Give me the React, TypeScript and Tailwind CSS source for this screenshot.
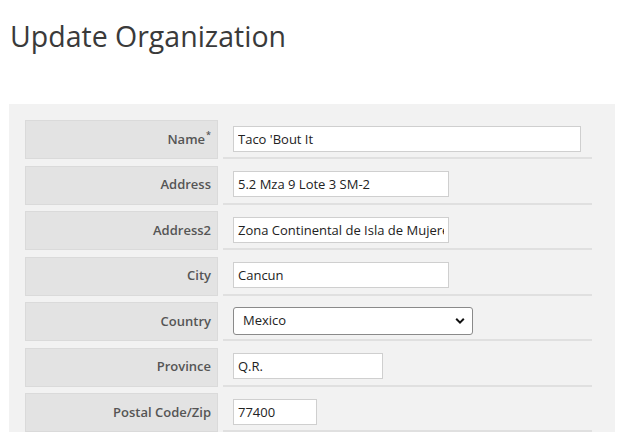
import React from "react";

type Field = {
	label: string;
	value: string;
	width: string;
	required?: boolean;
	select?: boolean;
};

const fields: Field[] = [
	{ label: "Name", value: "Taco 'Bout It", width: "w-[348px]", required: true },
	{ label: "Address", value: "5.2 Mza 9 Lote 3 SM-2", width: "w-[216px]" },
	{ label: "Address2", value: "Zona Continental de Isla de Mujeres", width: "w-[216px]" },
	{ label: "City", value: "Cancun", width: "w-[216px]" },
	{ label: "Country", value: "Mexico", width: "w-[240px]", select: true },
	{ label: "Province", value: "Q.R.", width: "w-[150px]" },
	{ label: "Postal Code/Zip", value: "77400", width: "w-[84px]" },
];

function Chevron() {
	return (
		<svg
			className="pointer-events-none absolute right-[8px] top-1/2 -translate-y-1/2"
			width="10"
			height="7"
			viewBox="0 0 10 7"
		>
			<path d="M1.2 1.3 L5 5.1 L8.8 1.3" fill="none" stroke="#111" strokeWidth="2" />
		</svg>
	);
}

export default function App() {
	return (
		<div className="min-h-[437px] bg-white font-['Open_Sans',sans-serif] text-[#333]">
			<h1 className="pl-[10px] pt-[16px] text-[28.5px] leading-[40px] font-normal text-[#3a3a3a]">
				Update Organization
			</h1>
			<div className="ml-[9px] mr-[2px] mt-[48px] bg-[#f2f2f2] pl-[16px] pt-[16px]">
				<div className="flex flex-col gap-[6.5px]">
					{fields.map((f) => (
						<div key={f.label} className="flex h-[39px] gap-[5px]">
							<div className="flex w-[193px] items-center justify-end border border-[#dadada] bg-[#e3e3e3] pr-[6px] text-[13px] font-semibold text-[#555]">
								{f.label}
								{f.required && (
									<span className="relative -top-[5px] ml-[1px] text-[9px]">*</span>
								)}
							</div>
							<div className="flex w-[369px] items-center border-b-2 border-[#e0e0e0] pl-[10px]">
								{f.select ? (
									<div className={`relative ${f.width}`}>
										<select
											defaultValue={f.value}
											className="h-[28px] w-full appearance-none rounded-[3px] border border-[#8a8a8a] bg-white pl-[9px] text-[13px] text-[#222] outline-none"
										>
											<option>Mexico</option>
										</select>
										<Chevron />
									</div>
								) : (
									<input
										readOnly
										value={f.value}
										className={`h-[26px] ${f.width} border border-[#cfcfcf] bg-white px-[4px] text-[13px] text-[#222] outline-none`}
									/>
								)}
							</div>
						</div>
					))}
				</div>
			</div>
		</div>
	);
}
